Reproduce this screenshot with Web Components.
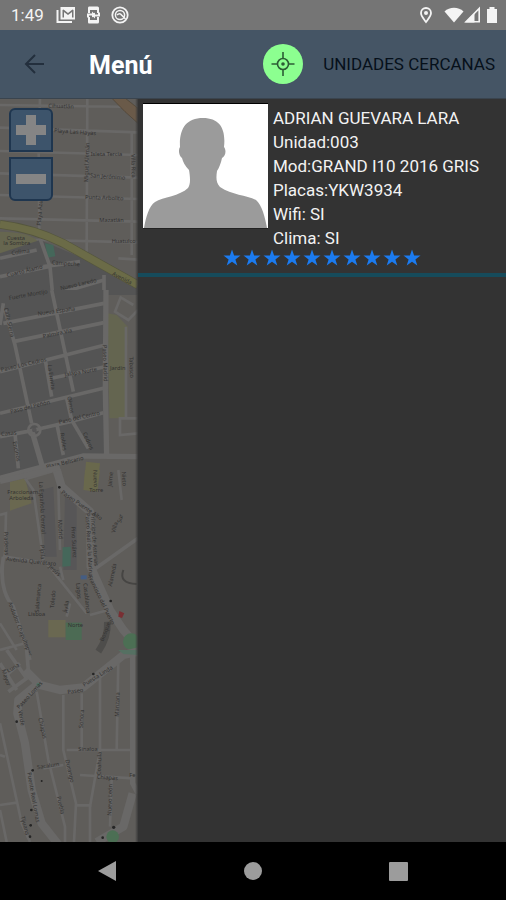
<!DOCTYPE html>
<html lang="es">
<head>
<meta charset="utf-8">
<meta name="viewport" content="width=device-width, initial-scale=1">
<title>Unidades cercanas</title>
<style>
    body {
        margin: 0;
        font-family: Roboto, sans-serif;
    }
</style>
</head>
<body>
<app-screen>
    <status-bar slot="top" time="1:49"></status-bar>
    <tool-bar slot="top" label="Menú">
        <locate-button>UNIDADES CERCANAS</locate-button>
    </tool-bar>
    <city-map></city-map>
    <unit-drawer>
        <unit-card rating="10">
            <unit-line>ADRIAN GUEVARA LARA</unit-line>
            <unit-line>Unidad:003</unit-line>
            <unit-line>Mod:GRAND I10 2016 GRIS</unit-line>
            <unit-line>Placas:YKW3934</unit-line>
            <unit-line>Wifi: SI</unit-line>
            <unit-line>Clima: SI</unit-line>
        </unit-card>
    </unit-drawer>
    <system-nav slot="bottom"></system-nav>
</app-screen>

<script>
(function(){
    class BaseElement extends HTMLElement {
        connectedCallback() {
            if (this.shadowRoot) return
            this.attachShadow({mode: "open"})
            this.shadowRoot.innerHTML = this._render()
        }
    }

    class AppScreen extends BaseElement {
        _render() {
            return `
                <style>
                    :host {
                        display: flex;
                        flex-direction: column;
                        min-height: 100vh;
                        background: #333;
                    }
                    main {
                        flex: 1;
                        display: grid;
                        grid-template-columns: 3fr 8fr;
                    }
                </style>
                <slot name="top"></slot>
                <main><slot></slot></main>
                <slot name="bottom"></slot>
            `
        }
    }

    class StatusBar extends BaseElement {
        _render() {
            return `
                <style>
                    :host {
                        display: flex;
                        align-items: center;
                        gap: 8px;
                        height: 30px;
                        padding: 0 6px 0 11px;
                        background: #757575;
                        color: #f4f4f4;
                        font-size: 17px;
                    }
                    svg { display: block; height: 20px; }
                    .time { margin-right: 4px; }
                    .right {
                        display: flex;
                        margin-left: auto;
                    }
                </style>
                <span class="time">${this.getAttribute("time") ?? ""}</span>
                <svg width="20" viewBox="0 0 20 20" fill="currentColor">
                    <path d="M.5 5v13h15.500v-2H2.500V5z"/>
                    <path fill-rule="evenodd" d="M4.500 2H19v12.500H4.500zM6.500 5v7.500H8V7l4 3 4-3v5.500h1.500V5l-1-.5L12 8 7.500 4.500z"/>
                </svg>
                <svg width="18" viewBox="0 0 18 20" fill="currentColor">
                    <path fill-rule="evenodd" d="M5 1.500h8.500Q15 1.500 15 3v5h-2V5H6v3H4V3q0-1.500 1-1.500zM4 12h2v3h7v-3h2v5q0 1.500-1.500 1.500H5Q4 18.500 4 17z"/>
                    <path d="M3 8.500h5V6.500l3 3-3 3v-2H5v2H3zM16 11.500h-5v2l-3-3 3-3v2h3v-2h2z"/>
                </svg>
                <svg width="20" viewBox="0 0 20 20" fill="none" stroke="currentColor">
                    <circle cx="10" cy="10" r="7.700" stroke-width="1.800"/>
                    <circle cx="10" cy="10" r="4.600" stroke-width="1.500"/>
                    <path stroke-width="1.600" d="M7 10c2-2 3.500-1.500 4.500 0l4 4"/>
                </svg>
                <div class="right">
                    <svg width="28" viewBox="0 0 28 20" fill="none" stroke="currentColor">
                        <path stroke-width="1.800" d="M10 17C7.500 13.500 5 11 5 8a5 5 0 0 1 10 0c0 3-2.500 5.500-5 9z"/>
                        <circle cx="10" cy="8" r="2" fill="currentColor" stroke="none"/>
                    </svg>
                    <svg width="20" viewBox="0 0 20 20" fill="currentColor"><path d="M10 17.500L.5 6.500c5-5 14-5 19 0z"/></svg>
                    <svg width="20" viewBox="0 0 20 20">
                        <path fill="none" stroke="currentColor" stroke-width="1.600" d="M2 16.700L15.200 3.500v13.200z"/>
                        <path fill="currentColor" d="M1 17.500L10.500 8v9.500z"/>
                    </svg>
                    <svg width="16" viewBox="0 0 16 20" fill="currentColor"><path d="M5.500 2h5v2H13v14H3V4h2.500z"/></svg>
                </div>
            `
        }
    }

    class ToolBar extends BaseElement {
        _render() {
            return `
                <style>
                    :host {
                        display: flex;
                        align-items: center;
                        height: 69px;
                        padding: 0 11px 0 20px;
                        background: #455565;
                        border-bottom: 1px solid #3a444e;
                        box-sizing: border-box;
                    }
                    button {
                        padding: 0;
                        border: 0;
                        background: none;
                        color: #232f3d;
                    }
                    svg { display: block; }
                    h1 {
                        margin: 4px 0 0 41px;
                        color: #fff;
                        font-size: 25px;
                        line-height: 32px;
                        font-weight: 700;
                    }
                    .actions { margin-left: auto; }
                </style>
                <button aria-label="Atrás">
                    <svg width="28" height="28" viewBox="0 0 28 28" fill="none" stroke="currentColor" stroke-width="2">
                        <path d="M24 14H6M15 5l-9 9 9 9"/>
                    </svg>
                </button>
                <h1>${this.getAttribute("label") ?? ""}</h1>
                <div class="actions"><slot></slot></div>
            `
        }
    }

    class LocateButton extends BaseElement {
        _render() {
            return `
                <style>
                    :host { display: block; }
                    button {
                        display: flex;
                        align-items: center;
                        gap: 20px;
                        padding: 0;
                        border: 0;
                        background: none;
                        color: #06101a;
                        font: 17px Roboto, sans-serif;
                    }
                    svg { display: block; }
                </style>
                <button>
                    <svg width="40" height="40" viewBox="0 0 40 40" fill="none" stroke="#2c5c35" stroke-width="1.600">
                        <circle cx="20" cy="20" r="20" fill="#8cff90" stroke="none"/>
                        <circle cx="20" cy="20" r="5.500"/>
                        <circle cx="20" cy="20" r="1.800" fill="#2c5c35" stroke="none"/>
                        <path d="M20 8v7M20 25v7M8.500 20H15M25 20h6.500"/>
                    </svg>
                    <span><slot></slot></span>
                </button>
            `
        }
    }

    // Streets are grouped in bands from north to south, each with its own vertical offset
    const BANDS = [
        {
            y: 0,
            shapes: `
                <path class="road" d="M120 9L116 170 118 410M262 9L260 470M0 98L414 112M0 168L414 180M0 235L414 248M0 300L414 312M0 370L414 380M0 432L414 442M0 30L414 36M395 110V480M355 490L414 494"/>
                <path fill="#6a5a49" stroke="#4d4234" stroke-width="2" d="M335 9L375 9 414 40 414 85 375 50z"/>
                <path fill="#66664f" d="M0 410Q90 410 115 440 90 470 0 475z"/>
                <path class="urban" d="M0 475L120 435 414 560V600H0z"/>
                <path fill="#45675a" d="M135 445L160 450 166 484 143 488z"/>
                <path class="road wide" d="M120 430L150 515 158 600M0 545L145 515M0 490L110 465M130 515L240 500M160 600L312 555M312 540V600"/>
                <path fill="none" stroke="#55563e" stroke-width="26" d="M0 388Q100 400 190 445L414 570"/>
                <path fill="none" stroke="#6b6b47" stroke-width="22" d="M0 388Q100 400 190 445L414 570"/>`,
            labels: [
                ["Cihuatlán", 145, 38, 2], ["Playa Las Hayas", 162, 112, 4], ["Isleta Tercia", 272, 182, 0],
                ["San Jerónimo", 270, 247, 4], ["Punta Arbolito", 255, 312, 2], ["Mazatlán", 298, 382, 0],
                ["Huatulco", 335, 445, 0], ["Cuesta", 20, 434, 0], ["la Sombra", 10, 450, 0], ["Colima", 35, 480, -8],
                ["Cuarto Álamo", 22, 547, -14], ["Nuevo Laredo", 182, 586, -13], ["Avenida", 335, 540, 27],
                ["Campeche", 155, 508, 4], ["Playa Azul", 122, 392, -86], ["Miguel Alemán", 264, 262, -88],
                ["Villa Rica", 393, 178, 88]
            ]
        },
        {
            y: 585,
            shapes: `
                <path class="urban" d="M0 0H320L315 490 0 560z"/>
                <path fill="#646550" d="M323 70L350 75 383 110 378 385H328z"/>
                <path class="road" d="M414 60L385 90 345 65 362 22 400 45M414 385H360V435L414 430M378 110V385"/>
                <path class="road wide" d="M155 0L185 140 220 305M0 105L10 40M10 100L312 40M40 155L312 98M0 245L315 165M155 265L315 230M0 370L310 295M0 440L80 425 210 395 310 368M15 60L45 165 95 400M135 205L155 320M200 325L215 390 265 475M170 400L190 495M45 430L55 535"/>
                <path class="road street" d="M318 0L316 300 320 500M0 565L250 498 414 500M95 420L130 540"/>
                <path class="road" fill="#625f5c" d="M85 420a18 18 0 1 0 36 0a18 18 0 1 0-36 0"/>
                <path fill="#69684c" d="M258 515L300 520 292 585H252z"/>
                <circle class="block" cx="103" cy="420" r="7"/>`,
            labels: [
                ["Fuerte Montijo", 28, 30, -10], ["Nueva España", 114, 77, -8], ["Palmira Vía", 130, 145, -12],
                ["Paseo Los Cedros", 4, 245, -13], ["Jalapa Norte", 195, 260, -10], ["Paso del Peñón", 32, 371, -14],
                ["Paso del Centro", 178, 402, -13], ["Casas", 4, 438, -6], ["Plaza Belisario", 140, 537, -14],
                ["Calle Sierra", 12, 55, 77], ["La Ermita", 143, 225, 82], ["Paseo Madrid", 308, 165, 88],
                ["Jardín", 330, 240, 0], ["Tabasco", 388, 200, 88], ["Olmos", 202, 320, 80],
                ["Robles", 180, 430, 80], ["Cedros", 248, 430, 66], ["Encinos", 38, 455, 78]
            ]
        },
        {
            y: 1125,
            shapes: `
                <path fill="#6a6850" d="M30 35L75 25 95 100 30 122z"/>
                <path fill="#69684c" d="M255 0H300L292 65 250 60z"/>
                <path class="block" d="M125 60L160 50 170 260H135zM195 80L230 100V300H190z"/>
                <path fill="#45675a" d="M188 232L212 230V288L187 290z"/>
                <path class="road" d="M0 135L18 130 15 250 0 310M15 260L140 280 260 430M75 25L100 60 130 270M175 50L180 240M355 0L365 90M270 435L325 420 345 440M0 460L50 540M0 540L75 520M210 400L200 440M180 290L190 330"/>
                <path class="road wide" d="M10 260Q-5 360 40 410L90 570M280 300L414 205M80 25L165 0"/>
                <path class="road avenue" d="M170 0L185 50 270 125 272 290 330 420 370 480 414 530"/>
                <path class="road street" d="M0 34L180 -8"/>
                <path fill="none" stroke="#4e4d4b" stroke-width="20" d="M295 545Q325 500 322 455"/>
                <path fill="#6a6851" d="M145 450H197V502H145z"/>
                <path fill="#4c6b54" d="M197 458H245V510H197z"/>
                <circle cx="394" cy="515" r="25" fill="#4c6f54"/>
                <path fill="#792f33" d="M358 423L373 430 366 444 355 440z"/>
                <path fill="#445d83" d="M242 316H260V328H242z"/>
                <circle cx="332" cy="393" r="4" fill="#222"/><circle cx="178" cy="52" r="4" fill="#222"/>
                <path fill="none" stroke="#464543" stroke-width="6" d="M370 300Q355 340 410 342"/>`,
            labels: [
                ["Fraccionam.", 22, 72, 0], ["Arboleda", 28, 90, 0], ["La Española Central", 117, 35, 87],
                ["Pípila", 121, 225, 88], ["Madrid", 174, 150, 87], ["Pino Suárez", 214, 170, 87],
                ["Paseo Puente Alto", 182, 70, 34], ["Paseo Real de la Marina", 257, 130, 87],
                ["Príncipe de Asturias", 272, 130, 86], ["Francisco del Puerto", 264, 320, 64],
                ["Avenida Querétaro", 18, 272, 6], ["Jesús", 145, 292, 42], ["Praderas", 12, 185, 88],
                ["Andador Chapultepec", 24, 398, 69], ["Salamanca", 116, 428, -85], ["Toledo", 162, 415, -85],
                ["Ávila", 203, 430, -85], ["Lisboa", 84, 437, 0], ["Lagos", 228, 340, 84], ["Casablanca", 250, 340, 84],
                ["Norte", 203, 470, 0], ["Bosque", 310, 515, -68], ["Alameda", 335, 350, -78],
                ["Jaime", 335, 50, -84], ["Nuevo", 280, 0, 88], ["Nieto", 365, 5, 86], ["Torre", 268, 67, 0],
                ["Villa", 345, 190, -76], ["Sur", 363, 160, -76]
            ]
        },
        {
            y: 1665,
            shapes: `
                <path class="road wide" d="M20 0L80 85 25 125M0 40L50 120M80 0L85 60M60 40L25 70"/>
                <path class="road" d="M110 125L145 330 195 530V576M190 135V300L228 460 222 576M245 130V300M300 80V300L270 470V576M355 30L350 300M200 300H390M130 355L190 345M240 375L400 385M335 390L330 530M0 220L65 520 90 576M225 466H275M0 465L50 458M0 315L15 320M0 480L20 576"/>
                <path class="road avenue" d="M75 60L120 105 180 120 250 112 370 15 414 5M110 105L55 150 52 190 75 280 95 420 125 520 180 590M398 430L370 530 290 576"/>
                <path class="road street" d="M398 0V400L414 430"/>
                <circle cx="338" cy="560" r="19" fill="#4c6f54"/>
                <circle cx="115" cy="104" r="6" fill="#507065"/>
                <path fill="#557062" d="M355 0H414V15L370 12z"/>
                <g fill="#252525"><circle cx="280" cy="72" r="4"/><circle cx="50" cy="215" r="4"/><circle cx="98" cy="361" r="4"/><circle cx="125" cy="393" r="3"/><circle cx="94" cy="480" r="4"/><circle cx="92" cy="526" r="4"/><circle cx="341" cy="532" r="5"/><circle cx="308" cy="563" r="4"/><circle cx="90" cy="560" r="4"/></g>`,
            labels: [
                ["Paseo", 203, 132, -8], ["Puesta Linda", 253, 110, -32], ["Paseo Lomas", 58, 178, -48],
                ["Verde", 55, 182, 80], ["Chiapas", 115, 205, 77], ["Sonora", 248, 235, -86],
                ["Manzana", 356, 200, -88], ["Sinaloa", 235, 302, 0], ["Sacalum", 112, 358, -9],
                ["Durango", 196, 330, 77], ["Coahuila", 302, 375, -88], ["Chiapas", 290, 386, 4],
                ["Puente Real Lomas", 82, 368, 80], ["Puebla", 170, 440, 77], ["Nuevo León", 334, 497, -88],
                ["Tijuana", 62, 500, 75], ["Mayor", 5, 60, 72], ["Luna", 25, 68, -30], ["Fe", 388, 380, 0]
            ]
        }
    ]

    class CityMap extends BaseElement {
        #band({y, shapes, labels}) {
            const texts = labels.map(([name, x, ty, angle]) =>
                `<text transform="translate(${x} ${ty}) rotate(${angle})">${name}</text>`
            ).join("")
            return `<g transform="translate(0 ${y})">${shapes}${texts}</g>`
        }

        _render() {
            return `
                <style>
                    :host {
                        position: relative;
                        display: block;
                        overflow: hidden;
                        background: #5f5d5a;
                    }
                    /* shade cast by the drawer */
                    :host::after {
                        content: "";
                        position: absolute;
                        inset: 0 0 0 auto;
                        width: 3px;
                        background: linear-gradient(to right, transparent, #3a3a3a);
                    }
                    .map {
                        position: absolute;
                        inset: 0;
                        width: 100%;
                        height: 100%;
                    }
                    .road { fill: none; stroke: #696867; stroke-width: 8; }
                    .wide { stroke-width: 11; }
                    .street { stroke-width: 16; }
                    .avenue { stroke-width: 25; stroke-linejoin: round; }
                    .urban { fill: #545454; }
                    .block { fill: #575657; }
                    text { fill: #333231; font: 17px "Noto Sans", sans-serif; }
                    .zoom {
                        position: absolute;
                        top: 9px;
                        left: 9px;
                        display: grid;
                        gap: 5px;
                    }
                    button {
                        width: 44px;
                        height: 44px;
                        padding: 0;
                        border: 2px solid #1f364f;
                        border-radius: 6px 6px 0 0;
                        background: #3d546b;
                    }
                    button + button { border-radius: 0 0 6px 6px; }
                    button svg { display: block; }
                </style>
                <svg class="map" viewBox="0 12 414 2229" preserveAspectRatio="xMinYMin slice" aria-hidden="true">
                    ${BANDS.map(band => this.#band(band)).join("")}
                </svg>
                <div class="zoom">
                    <button aria-label="Acercar">
                        <svg width="40" height="40" viewBox="0 0 40 40" fill="#858585"><path d="M15 5h10v10h10v10H25v10H15V25H5V15h10z"/></svg>
                    </button>
                    <button aria-label="Alejar">
                        <svg width="40" height="40" viewBox="0 0 40 40" fill="#858585"><path d="M5 15h30v10H5z"/></svg>
                    </button>
                </div>
            `
        }
    }

    class UnitDrawer extends BaseElement {
        _render() {
            return `
                <style>
                    :host {
                        display: block;
                        background: #333;
                    }
                </style>
                <slot></slot>
            `
        }
    }

    class UnitLine extends BaseElement {
        _render() {
            return `
                <style>
                    :host { display: block; }
                </style>
                <slot></slot>
            `
        }
    }

    class UnitCard extends BaseElement {
        _render() {
            const count = Number(this.getAttribute("rating") ?? 0)
            const star = `<svg width="20" height="20" viewBox="0 0 20 20"><path d="M10 1.500l2.100 6h6.400l-5.100 3.900 1.900 6.100L10 13.800l-5.300 3.700 1.900-6.100L1.500 7.500h6.400z"/></svg>`
            return `
                <style>
                    :host {
                        display: block;
                        padding: 4px 5px 5px;
                        border-bottom: 4px solid #164b5b;
                        color: #f2f2f2;
                        font-size: 17px;
                        line-height: 24px;
                    }
                    .info {
                        display: flex;
                        gap: 5px;
                    }
                    .photo {
                        flex: none;
                        display: block;
                        border-top: 1px solid #000;
                        border-bottom: 1px solid #222;
                        background: #fff;
                    }
                    .lines { padding-top: 3px; }
                    .stars {
                        display: flex;
                        justify-content: center;
                        height: 20px;
                        margin-top: -2px;
                        fill: #1b7bf0;
                    }
                </style>
                <div class="info">
                    <svg class="photo" width="125" height="124" viewBox="0 0 125 124" role="img" aria-label="Foto">
                        <path fill="#9b9b9b" d="M1 124C3 113 6 102 12 98 20 93 37 92 45 84 48 80 47 72 46 66 42 62 40 58 39 54 36 52 35 46 37 43 36 25 43 14 60 14S83 25 81 43C84 47 82 53 79 54 78 59 76 64 74 67 73 74 73 79 77 83 89 91 103 91 113 96 119 101 122 113 124 124z"/>
                    </svg>
                    <div class="lines"><slot></slot></div>
                </div>
                <div class="stars" role="img" aria-label="${count} estrellas">${star.repeat(count)}</div>
            `
        }
    }

    class SystemNav extends BaseElement {
        _render() {
            return `
                <style>
                    :host {
                        display: flex;
                        align-items: center;
                        justify-content: space-around;
                        height: 58px;
                        padding: 0 7%;
                        background: #000;
                    }
                    button {
                        padding: 0;
                        border: 0;
                        background: none;
                    }
                    svg { display: block; fill: #9c9c9c; }
                </style>
                <button aria-label="Atrás"><svg width="24" height="24" viewBox="0 0 24 24"><path d="M2 12L20 2v20z"/></svg></button>
                <button aria-label="Inicio"><svg width="24" height="24" viewBox="0 0 24 24"><circle cx="12" cy="12" r="9"/></svg></button>
                <button aria-label="Recientes"><svg width="24" height="24" viewBox="0 0 24 24"><rect x="3" y="3" width="19" height="19" rx="1"/></svg></button>
            `
        }
    }

    customElements.define('app-screen', AppScreen)
    customElements.define('status-bar', StatusBar)
    customElements.define('tool-bar', ToolBar)
    customElements.define('locate-button', LocateButton)
    customElements.define('city-map', CityMap)
    customElements.define('unit-drawer', UnitDrawer)
    customElements.define('unit-line', UnitLine)
    customElements.define('unit-card', UnitCard)
    customElements.define('system-nav', SystemNav)
})()
</script>
</body>
</html>
